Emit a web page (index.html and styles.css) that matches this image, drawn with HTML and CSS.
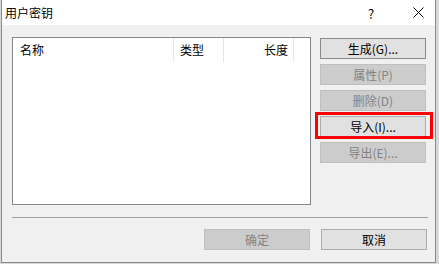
FILE: index.html
```html
<!DOCTYPE html>
<html lang="zh-CN">
<head>
    <meta charset="UTF-8">
    <title>用户密钥</title>
    <link rel="stylesheet" href="styles.css">
</head>
<body>
    <div class="window">
        <div class="titlebar">
            <div class="title">用户密钥</div>
            <div class="caption-btn help">?</div>
            <div class="caption-btn close">
                <svg width="11" height="11" viewBox="0 0 11 11"><path d="M0.5 0.5 L10.5 10.5 M10.5 0.5 L0.5 10.5" stroke="#000" stroke-width="1" fill="none"/></svg>
            </div>
        </div>
        <div class="content">
            <div class="list">
                <div class="list-head">
                    <div class="col col-name">名称</div>
                    <div class="col col-type">类型</div>
                    <div class="col col-len">长度</div>
                </div>
            </div>
            <div class="side-buttons">
                <button class="btn default">生成(G)...</button>
                <button class="btn" disabled>属性(P)</button>
                <button class="btn" disabled>删除(D)</button>
                <button class="btn marked">导入(I)...<span class="mark"></span></button>
                <button class="btn" disabled>导出(E)...</button>
            </div>
        </div>
        <div class="separator"></div>
        <div class="footer">
            <button class="btn" disabled>确定</button>
            <button class="btn">取消</button>
        </div>
    </div>
</body>
</html>
```

FILE: styles.css
```css
body {
    margin: 0;
    background-color: #d8d8d8;
    font-family: "Noto Sans CJK SC", "Liberation Sans", sans-serif;
    font-size: 12px;
    color: #000;
}

.window {
    width: 435px;
    height: 263px;
    margin-left: 1px;
    box-sizing: border-box;
    border: 1px solid #8a8a8a;
    border-top: none;
    background-color: #f0f0f0;
    display: flex;
    flex-direction: column;
}

.titlebar {
    height: 25px;
    background-color: #fff;
    display: flex;
    align-items: center;
}

.title {
    flex: 1;
    padding-left: 3px;
}

.caption-btn {
    height: 25px;
    display: flex;
    align-items: center;
    justify-content: center;
}

.help {
    width: 60px;
    font-size: 13px;
    padding-top: 1px;
}

.close {
    width: 34px;
}

.content {
    display: flex;
    gap: 9px;
    padding: 12px 0 0 10px;
}

.list {
    width: 299px;
    height: 168px;
    box-sizing: border-box;
    border: 1px solid #828790;
    background-color: #fff;
}

.list-head {
    display: flex;
    height: 24px;
}

.col {
    box-sizing: border-box;
    border-right: 1px solid #e5e5e5;
    padding-top: 3px;
}

.col-name {
    width: 161px;
    padding-left: 7px;
}

.col-type {
    width: 50px;
    padding-left: 6px;
}

.col-len {
    width: 70px;
    text-align: right;
    padding-right: 5px;
}

.side-buttons {
    display: flex;
    flex-direction: column;
    gap: 5px;
    padding-top: 1px;
}

.btn {
    position: relative;
    width: 106px;
    height: 21px;
    padding: 0;
    font-family: inherit;
    font-size: 12px;
    color: #000;
    background-color: #e1e1e1;
    border: 1px solid #adadad;
    line-height: 18px;
}

.btn:disabled {
    color: #838383;
    background-color: #cccccc;
    border-color: #bfbfbf;
}

.btn.default {
    border-color: #8a8a8a;
}

.mark {
    position: absolute;
    top: -5px;
    left: -6px;
    right: -8px;
    bottom: -3px;
    border: 3px solid #ff0000;
}

.separator {
    height: 1px;
    margin: 12px 7px 0 10px;
    background-color: #a0a0a0;
}

.footer {
    display: flex;
    justify-content: flex-end;
    gap: 11px;
    padding: 11px 8px 0 0;
}
```
